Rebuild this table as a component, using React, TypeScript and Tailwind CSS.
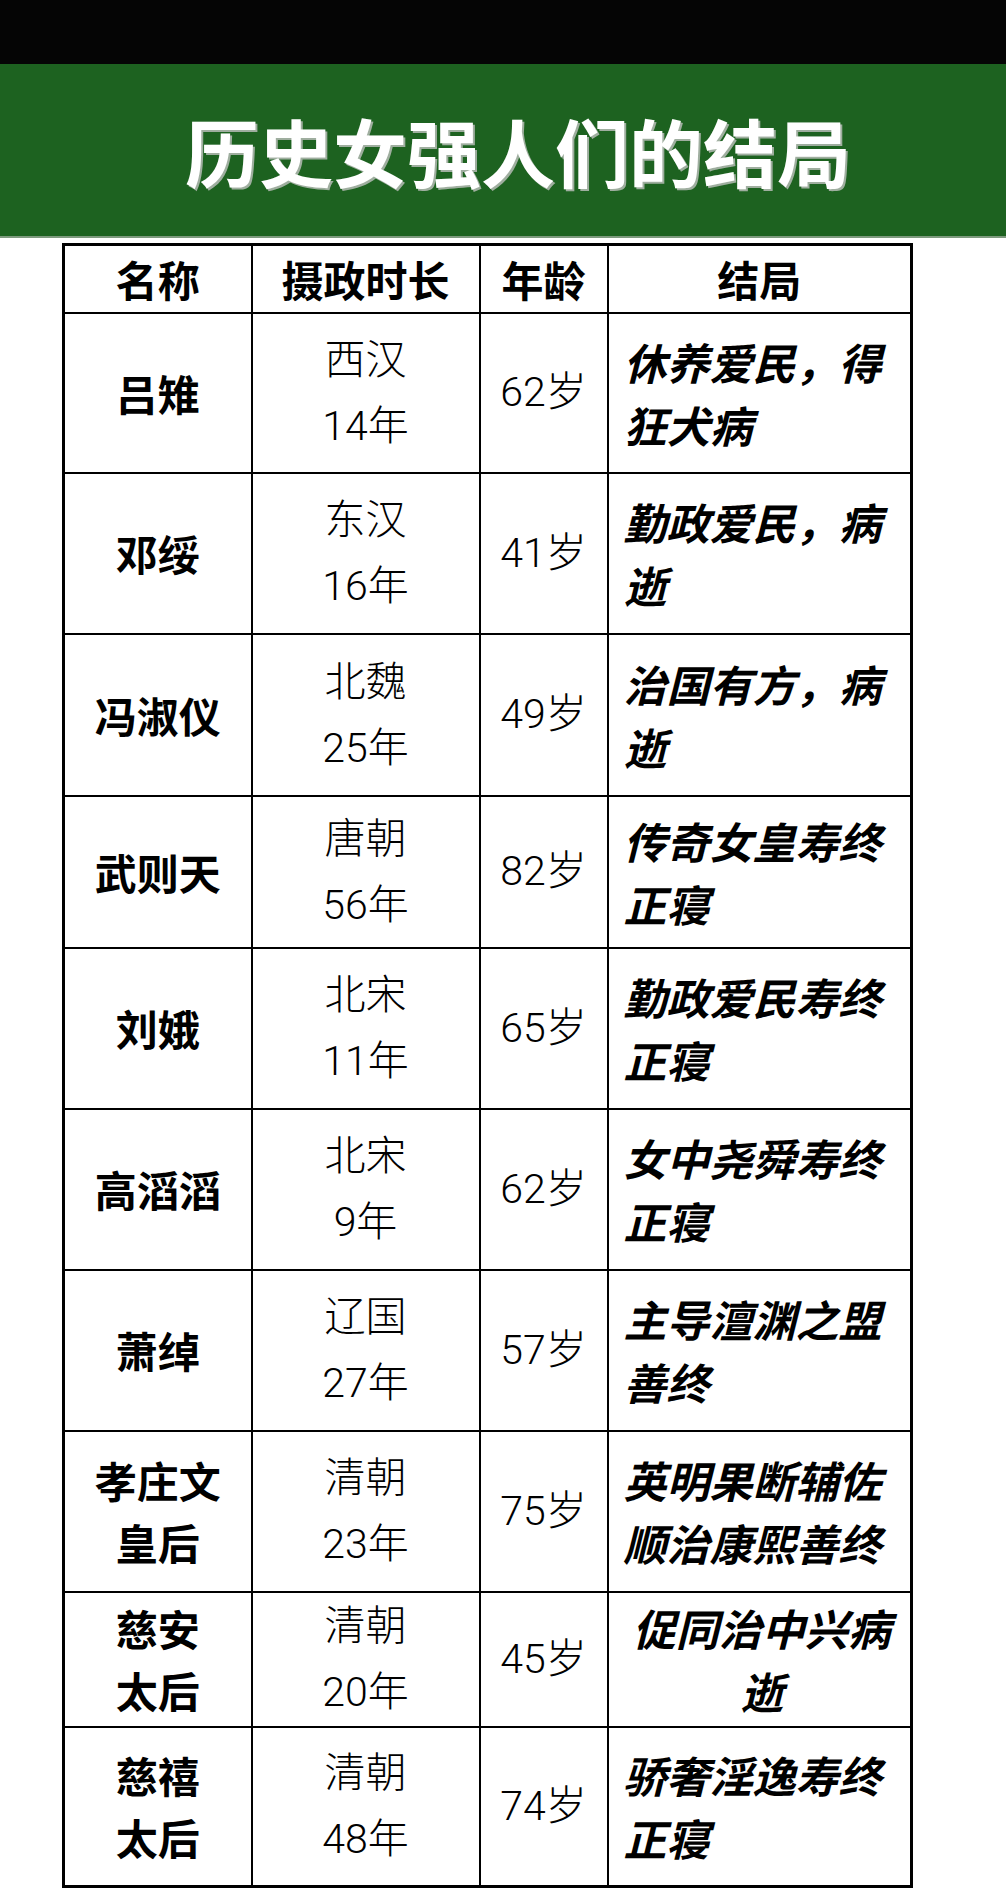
import React from 'react';

type Row = {
  name: string[];
  era: string;
  years: string;
  age: string;
  end: string[];
  h: string;
  center?: boolean;
};

const rows: Row[] = [
  { name: ['吕雉'], era: '西汉', years: '14年', age: '62岁', end: ['休养爱民，得', '狂犬病'], h: 'h-[160px]' },
  { name: ['邓绥'], era: '东汉', years: '16年', age: '41岁', end: ['勤政爱民，病', '逝'], h: 'h-[161px]' },
  { name: ['冯淑仪'], era: '北魏', years: '25年', age: '49岁', end: ['治国有方，病', '逝'], h: 'h-[162px]' },
  { name: ['武则天'], era: '唐朝', years: '56年', age: '82岁', end: ['传奇女皇寿终', '正寝'], h: 'h-[152px]' },
  { name: ['刘娥'], era: '北宋', years: '11年', age: '65岁', end: ['勤政爱民寿终', '正寝'], h: 'h-[161px]' },
  { name: ['高滔滔'], era: '北宋', years: '9年', age: '62岁', end: ['女中尧舜寿终', '正寝'], h: 'h-[161px]' },
  { name: ['萧绰'], era: '辽国', years: '27年', age: '57岁', end: ['主导澶渊之盟', '善终'], h: 'h-[161px]' },
  { name: ['孝庄文', '皇后'], era: '清朝', years: '23年', age: '75岁', end: ['英明果断辅佐', '顺治康熙善终'], h: 'h-[161px]' },
  { name: ['慈安', '太后'], era: '清朝', years: '20年', age: '45岁', end: ['促同治中兴病', '逝'], h: 'h-[135px]', center: true },
  { name: ['慈禧', '太后'], era: '清朝', years: '48年', age: '74岁', end: ['骄奢淫逸寿终', '正寝'], h: 'h-[160px]' },
];

const cjk = "font-['Noto_Sans_CJK_SC',sans-serif]";
const thin = "font-['Roboto','Noto_Sans_CJK_SC',sans-serif] font-light";

export default function App() {
  return (
    <div className="w-[1006px] min-h-[1892px] bg-white">
      {/* top bar */}
      <div className="h-[64px] bg-[#050505]" />

      {/* title band */}
      <div className="h-[174px] bg-[#1d6220] border-b-[2px] border-[#7e9a7e] flex items-center justify-center pl-[30px]">
        <h1
          className={`${cjk} font-bold text-[74px] leading-none text-white [text-shadow:2px_2px_0_#9fae9f]`}
        >
          历史女强人们的结局
        </h1>
      </div>

      {/* table */}
      <div className="pt-[5px] pl-[62px]">
        <table className="table-fixed border-collapse w-[848px] border-[3px] border-black text-black">
          <colgroup>
            <col className="w-[188px]" />
            <col className="w-[228px]" />
            <col className="w-[128px]" />
            <col className="w-[304px]" />
          </colgroup>
          <thead>
            <tr className="h-[68px]">
              {['名称', '摄政时长', '年龄', '结局'].map((t) => (
                <th
                  key={t}
                  className={`${cjk} border-2 border-black text-[42px] font-bold leading-none text-center align-middle`}
                >
                  {t}
                </th>
              ))}
            </tr>
          </thead>
          <tbody>
            {rows.map((r) => (
              <tr key={r.name.join('')} className={r.h}>
                <td className={`${cjk} border-2 border-black text-center align-middle font-bold text-[42px] leading-[62px]`}>
                  {r.name.map((n) => (
                    <div key={n}>{n}</div>
                  ))}
                </td>
                <td className={`${thin} border-2 border-black text-center align-middle text-[41px] leading-[66px]`}>
                  <div>{r.era}</div>
                  <div>{r.years}</div>
                </td>
                <td className={`${thin} border-2 border-black text-center align-middle text-[41px] leading-none`}>
                  {r.age}
                </td>
                <td
                  className={`${cjk} border-2 border-black align-middle font-bold italic text-[43px] leading-[63px] whitespace-nowrap pl-[15px] ${
                    r.center ? 'text-center pr-[10px]' : 'text-left'
                  }`}
                >
                  {r.end.map((e) => (
                    <div key={e}>{e}</div>
                  ))}
                </td>
              </tr>
            ))}
          </tbody>
        </table>
      </div>
    </div>
  );
}
